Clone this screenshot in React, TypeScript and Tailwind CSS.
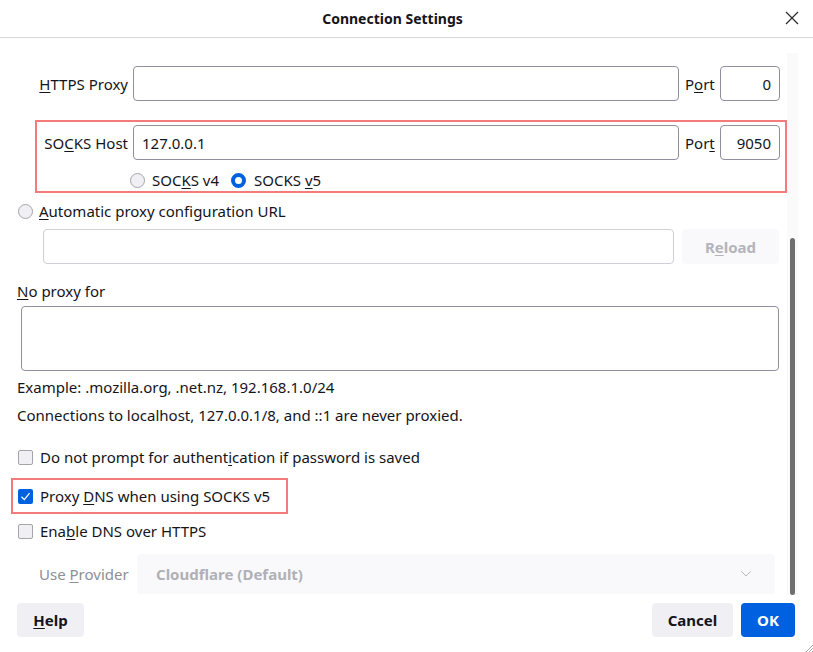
import type { ReactNode } from 'react';

const font = { fontFamily: '"Noto Sans", "Open Sans", sans-serif' };

const U = ({ children }: { children: ReactNode }) => (
  <span className="underline underline-offset-2">{children}</span>
);

const Radio = ({ checked = false }: { checked?: boolean }) =>
  checked ? (
    <span className="w-[15px] h-[15px] rounded-full border-[4px] border-[#0061e0] bg-white shrink-0" />
  ) : (
    <span className="w-[15px] h-[15px] rounded-full border border-[#a4a4ab] bg-[#f0f0f4] shrink-0" />
  );

const Checkbox = ({ checked = false }: { checked?: boolean }) =>
  checked ? (
    <span className="w-[15px] h-[15px] rounded-[2px] bg-[#0061e0] flex items-center justify-center shrink-0">
      <svg width="11" height="11" viewBox="0 0 11 11" fill="none">
        <path d="M1.5 5.8 L4.3 8.6 L9.6 2.2" stroke="white" strokeWidth="1.3" />
      </svg>
    </span>
  ) : (
    <span className="w-[15px] h-[15px] rounded-[2px] border border-[#a4a4ab] bg-[#f0f0f4] shrink-0" />
  );

const Field = ({ value = '', className = '' }: { value?: string; className?: string }) => (
  <div
    className={`h-[35px] rounded-[4px] border border-[#8f8f9d] bg-white flex items-center px-[8px] text-[#15141a] shrink-0 ${className}`}
  >
    {value}
  </div>
);

export default function App() {
  return (
    <div
      className="w-[813px] h-[652px] bg-white flex flex-col text-[#15141a] text-[15px] leading-[20px] relative overflow-hidden"
      style={font}
    >
      {/* title bar */}
      <div className="h-[38px] border-b border-[#d6d6d6] flex items-center justify-center pr-[28px] relative shrink-0">
        <span className="text-[14px] font-bold">Connection Settings</span>
        <svg className="absolute right-[14px] top-[11px]" width="14" height="14" viewBox="0 0 14 14">
          <path d="M1 1 L13 13 M13 1 L1 13" stroke="#2b2b2b" strokeWidth="1.2" />
        </svg>
      </div>

      <div className="flex flex-1 min-h-0">
        <div className="flex-1">
          {/* HTTPS proxy */}
          <div className="flex items-center ml-[37px] mt-[28px]">
            <span className="w-[91px] text-right">
              <U>H</U>TTPS Proxy
            </span>
            <Field className="ml-[5px] w-[546px]" />
            <span className="w-[41px] pl-[6px]">
              P<U>o</U>rt
            </span>
            <Field value="0" className="w-[60px] justify-end" />
          </div>

          {/* SOCKS */}
          <div className="ml-[35px] mt-[19px] w-[752px] h-[73px] border-2 border-[#f47b7b]">
            <div className="flex items-center mt-[3px]">
              <span className="w-[91px] text-right">
                SO<U>C</U>KS Host
              </span>
              <Field value="127.0.0.1" className="ml-[5px] w-[546px]" />
              <span className="w-[41px] pl-[6px]">
                Por<U>t</U>
              </span>
              <Field value="9050" className="w-[60px] justify-end" />
            </div>
            <div className="flex items-center ml-[93px] mt-[10px]">
              <Radio />
              <span className="ml-[7px]">
                SOC<U>K</U>S v4
              </span>
              <span className="ml-[12px] flex items-center">
                <Radio checked />
              </span>
              <span className="ml-[8px]">
                SOCKS <U>v</U>5
              </span>
            </div>
          </div>

          {/* auto config */}
          <div className="flex items-center ml-[18px] mt-[8px]">
            <Radio />
            <span className="ml-[6px]">
              <U>A</U>utomatic proxy configuration URL
            </span>
          </div>
          <div className="flex items-center ml-[43px] mt-[8px]">
            <div className="w-[631px] h-[35px] rounded-[4px] border border-[#cfcfd8] bg-white" />
            <div className="ml-[8px] w-[97px] h-[35px] rounded-[4px] bg-[#f9f9fb] flex items-center justify-center text-[#b4b4ba] font-bold">
              R<U>e</U>load
            </div>
          </div>

          <div className="ml-[17px] mt-[17px]">
            <U>N</U>o proxy for
          </div>
          <div className="ml-[21px] mt-[5px] w-[758px] h-[65px] rounded-[4px] border border-[#8f8f9d]" />

          <div className="ml-[17px] mt-[6px]">Example: .mozilla.org, .net.nz, 192.168.1.0/24</div>
          <div className="ml-[17px] mt-[8px]">Connections to localhost, 127.0.0.1/8, and ::1 are never proxied.</div>

          <div className="flex items-center ml-[18px] mt-[22px]">
            <Checkbox />
            <span className="ml-[7px]">
              Do not prompt for authent<U>i</U>cation if password is saved
            </span>
          </div>

          <div className="ml-[11px] mt-[11px] w-[277px] h-[36px] border-2 border-[#f47b7b] flex items-center pl-[5px]">
            <Checkbox checked />
            <span className="ml-[7px]">
              Proxy <U>D</U>NS when using SOCKS v5
            </span>
          </div>

          <div className="flex items-center ml-[18px] mt-[7px]">
            <Checkbox />
            <span className="ml-[7px]">
              Ena<U>b</U>le DNS over HTTPS
            </span>
          </div>

          <div className="flex items-center ml-[39px] mt-[13px]">
            <span className="text-[#8e8e94] w-[98px]">
              Use <U>P</U>rovider
            </span>
            <div className="w-[638px] h-[40px] rounded-[4px] bg-[#f9f9fb] flex items-center justify-between pl-[19px] pr-[24px] text-[#b0b0b6] font-bold">
              <span>Cloudflare (Default)</span>
              <svg width="10" height="6" viewBox="0 0 10 6">
                <path d="M0.5 0.5 L5 5 L9.5 0.5" stroke="#b8b8be" fill="none" />
              </svg>
            </div>
          </div>
        </div>

        {/* scrollbar */}
        <div className="w-[11px] mr-[15px] mt-[15px] mb-[8px] bg-[#fafafa] flex flex-col justify-end items-center">
          <div className="w-[5px] h-[357px] rounded-full bg-[#6f6f6f]" />
        </div>
      </div>

      {/* footer */}
      <div className="h-[49px] shrink-0 flex items-start px-[17px] font-bold">
        <div className="w-[67px] h-[34px] rounded-[4px] bg-[#f0f0f4] flex items-center justify-center">
          <U>H</U>elp
        </div>
        <div className="flex-1" />
        <div className="w-[81px] h-[34px] rounded-[4px] bg-[#f0f0f4] flex items-center justify-center">Cancel</div>
        <div className="ml-[8px] mr-[1px] w-[54px] h-[34px] rounded-[4px] bg-[#0061e0] text-white flex items-center justify-center">
          OK
        </div>
      </div>
      <svg className="absolute right-0 bottom-0" width="9" height="9" viewBox="0 0 9 9">
        <path d="M9 2 L2 9 M9 5 L5 9 M9 8 L8 9" stroke="#9a9a9a" strokeWidth="0.8" />
      </svg>
    </div>
  );
}
